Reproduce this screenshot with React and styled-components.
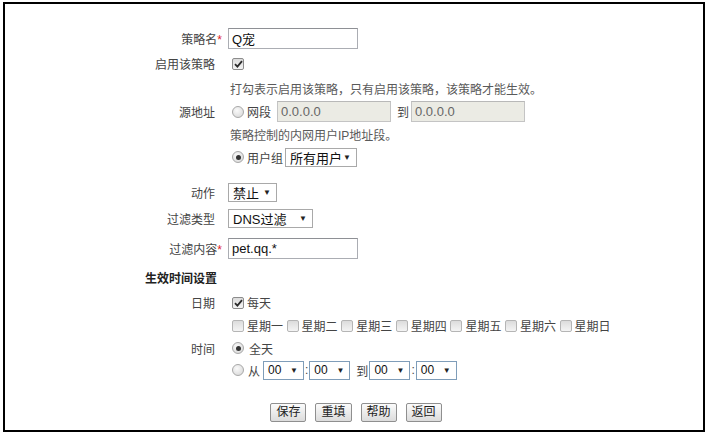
import * as React from "react";
import styled, { createGlobalStyle } from "styled-components";

const GlobalStyle = createGlobalStyle`
  body {
    margin: 0;
    background: #fff;
    font-family: "Liberation Sans", Arial, "Noto Sans CJK SC", sans-serif;
    color: #444;
  }
`;

const Frame = styled.div`
  box-sizing: border-box;
  width: 702px;
  height: 430px;
  margin: 2px 0 0 3px;
  border: 2px solid #000;
  padding-top: 22px;
`;

const Row = styled.div`
  display: grid;
  grid-template-columns: 213px 1fr;
  column-gap: 10px;
  align-items: center;
  height: ${(p) => p.$h}px;
  margin-top: ${(p) => p.$mt || 0}px;
`;

const Label = styled.div`
  text-align: right;
  padding-right: 3px;
  font-size: 12px;
  color: #444;
  white-space: nowrap;
`;

const Star = styled.span`
  color: #e0262b;
  margin-right: -7px;
  font-size: 12px;
`;

const Field = styled.div`
  display: flex;
  align-items: center;
  font-size: 12px;
  color: #444;
  white-space: nowrap;
`;

const Hint = styled.span`
  margin-left: 2px;
  font-size: 12px;
  color: #5a5a5a;
`;

const TextInput = styled.div`
  box-sizing: border-box;
  width: ${(p) => p.$w || 130}px;
  height: 21px;
  display: flex;
  align-items: center;
  padding: 0 3px;
  border: 1px solid ${(p) => (p.$disabled ? "#c4c4c4" : "#abadb3")};
  border-top-color: ${(p) => (p.$disabled ? "#b8b8b8" : "#8e9095")};
  background: ${(p) => (p.$disabled ? "#ebebe4" : "#fff")};
  color: ${(p) => (p.$disabled ? "#666" : "#111")};
  font-size: 13px;
  margin-left: ${(p) => p.$ml || 0}px;
`;

const Select = styled.div`
  box-sizing: border-box;
  width: ${(p) => p.$w}px;
  height: 19px;
  display: flex;
  align-items: center;
  justify-content: space-between;
  padding: 0 5px 0 4px;
  border: 1px solid ${(p) => (p.$blue ? "#7f9db9" : "#a9a9a9")};
  background: #fff;
  color: #111;
  font-size: ${(p) => (p.$blue ? 12 : 13)}px;
  margin-left: ${(p) => p.$ml || 0}px;

  &::after {
    content: "▼";
    font-size: 8px;
    color: #222;
  }
`;

const Box = styled.span`
  box-sizing: border-box;
  width: 12px;
  height: 12px;
  margin-left: ${(p) => p.$ml ?? 4}px;
  margin-right: 3px;
  border: 1px solid ${(p) => (p.$checked ? "#8c8c8c" : "#b5b5b5")};
  border-radius: 2px;
  background: linear-gradient(#dcdcdc, #f4f4f4);
  display: inline-flex;
  align-items: center;
  justify-content: center;
  flex: none;
`;

const Radio = styled.span`
  box-sizing: border-box;
  width: 12px;
  height: 12px;
  margin-left: 4px;
  margin-right: 3px;
  border: 1px solid #a8a8a8;
  border-radius: 50%;
  background: radial-gradient(circle at 40% 35%, #fafafa, #d4d4d4);
  display: inline-flex;
  align-items: center;
  justify-content: center;
  flex: none;

  &::after {
    content: "";
    display: ${(p) => (p.$checked ? "block" : "none")};
    width: 5px;
    height: 5px;
    border-radius: 50%;
    background: #333;
  }
`;

const Text = styled.span`
  margin-left: ${(p) => p.$ml || 0}px;
  margin-right: ${(p) => p.$mr || 0}px;
`;

const Section = styled.div`
  height: 28px;
  display: flex;
  align-items: center;
  padding-left: 140px;
  font-size: 12px;
  font-weight: bold;
  color: #222;
`;

const Week = styled.div`
  display: flex;
  align-items: center;
  width: 54.6px;
  flex: none;
`;

const Buttons = styled.div`
  display: flex;
  justify-content: center;
  gap: 9px;
  margin-top: 22px;
  padding-left: 4px;
`;

const Button = styled.button`
  box-sizing: border-box;
  height: 19px;
  padding: 0 5px;
  border: 1px solid #8f8f8f;
  border-radius: 2px;
  background: linear-gradient(#fbfbfb, #dcdcdc);
  font-family: inherit;
  font-size: 12px;
  color: #222;
  line-height: 17px;
`;

function Check({ checked, ml }) {
  return (
    <Box $checked={checked} $ml={ml}>
      {checked && (
        <svg width="9" height="8" viewBox="0 0 9 8">
          <path d="M1 4.2 L3.4 6.6 L8 1.2" fill="none" stroke="#2b2b2b" strokeWidth="1.8" />
        </svg>
      )}
    </Box>
  );
}

const days = ["星期一", "星期二", "星期三", "星期四", "星期五", "星期六", "星期日"];

export default function App() {
  return (
    <>
      <GlobalStyle />
      <Frame>
        <Row $h={25}>
          <Label>
            策略名<Star>*</Star>
          </Label>
          <Field>
            <TextInput>Q宠</TextInput>
          </Field>
        </Row>
        <Row $h={25}>
          <Label>启用该策略</Label>
          <Field>
            <Check checked />
          </Field>
        </Row>
        <Row $h={24}>
          <Label />
          <Field>
            <Hint>打勾表示启用该策略，只有启用该策略，该策略才能生效。</Hint>
          </Field>
        </Row>
        <Row $h={23}>
          <Label>源地址</Label>
          <Field>
            <Radio />
            <Text>网段</Text>
            <TextInput $disabled $w={114} $ml={6}>0.0.0.0</TextInput>
            <Text $ml={6}>到</Text>
            <TextInput $disabled $w={114} $ml={2}>0.0.0.0</TextInput>
          </Field>
        </Row>
        <Row $h={23}>
          <Label />
          <Field>
            <Hint>策略控制的内网用户IP地址段。</Hint>
          </Field>
        </Row>
        <Row $h={22}>
          <Label />
          <Field>
            <Radio $checked />
            <Text>用户组</Text>
            <Select $w={72} $ml={2}>所有用户</Select>
          </Field>
        </Row>

        <Row $h={22} $mt={13}>
          <Label>动作</Label>
          <Field>
            <Select $w={49}>禁止</Select>
          </Field>
        </Row>
        <Row $h={30}>
          <Label>过滤类型</Label>
          <Field>
            <Select $w={85}>DNS过滤</Select>
          </Field>
        </Row>
        <Row $h={30}>
          <Label>
            过滤内容<Star>*</Star>
          </Label>
          <Field>
            <TextInput>pet.qq.*</TextInput>
          </Field>
        </Row>

        <Section>生效时间设置</Section>

        <Row $h={23}>
          <Label>日期</Label>
          <Field>
            <Check checked />
            <Text>每天</Text>
          </Field>
        </Row>
        <Row $h={23}>
          <Label />
          <Field>
            {days.map((d) => (
              <Week key={d}>
                <Check />
                <Text>{d}</Text>
              </Week>
            ))}
          </Field>
        </Row>
        <Row $h={22}>
          <Label>时间</Label>
          <Field>
            <Radio $checked />
            <Text $ml={2}>全天</Text>
          </Field>
        </Row>
        <Row $h={22}>
          <Label />
          <Field>
            <Radio />
            <Text $ml={1}>从</Text>
            <Select $blue $w={41} $ml={3}>00</Select>
            <Text $ml={1} $mr={1}>:</Text>
            <Select $blue $w={41}>00</Select>
            <Text $ml={6} $mr={1}>到</Text>
            <Select $blue $w={41}>00</Select>
            <Text $ml={1} $mr={1}>:</Text>
            <Select $blue $w={41}>00</Select>
          </Field>
        </Row>

        <Buttons>
          <Button>保存</Button>
          <Button>重填</Button>
          <Button>帮助</Button>
          <Button>返回</Button>
        </Buttons>
      </Frame>
    </>
  );
}
